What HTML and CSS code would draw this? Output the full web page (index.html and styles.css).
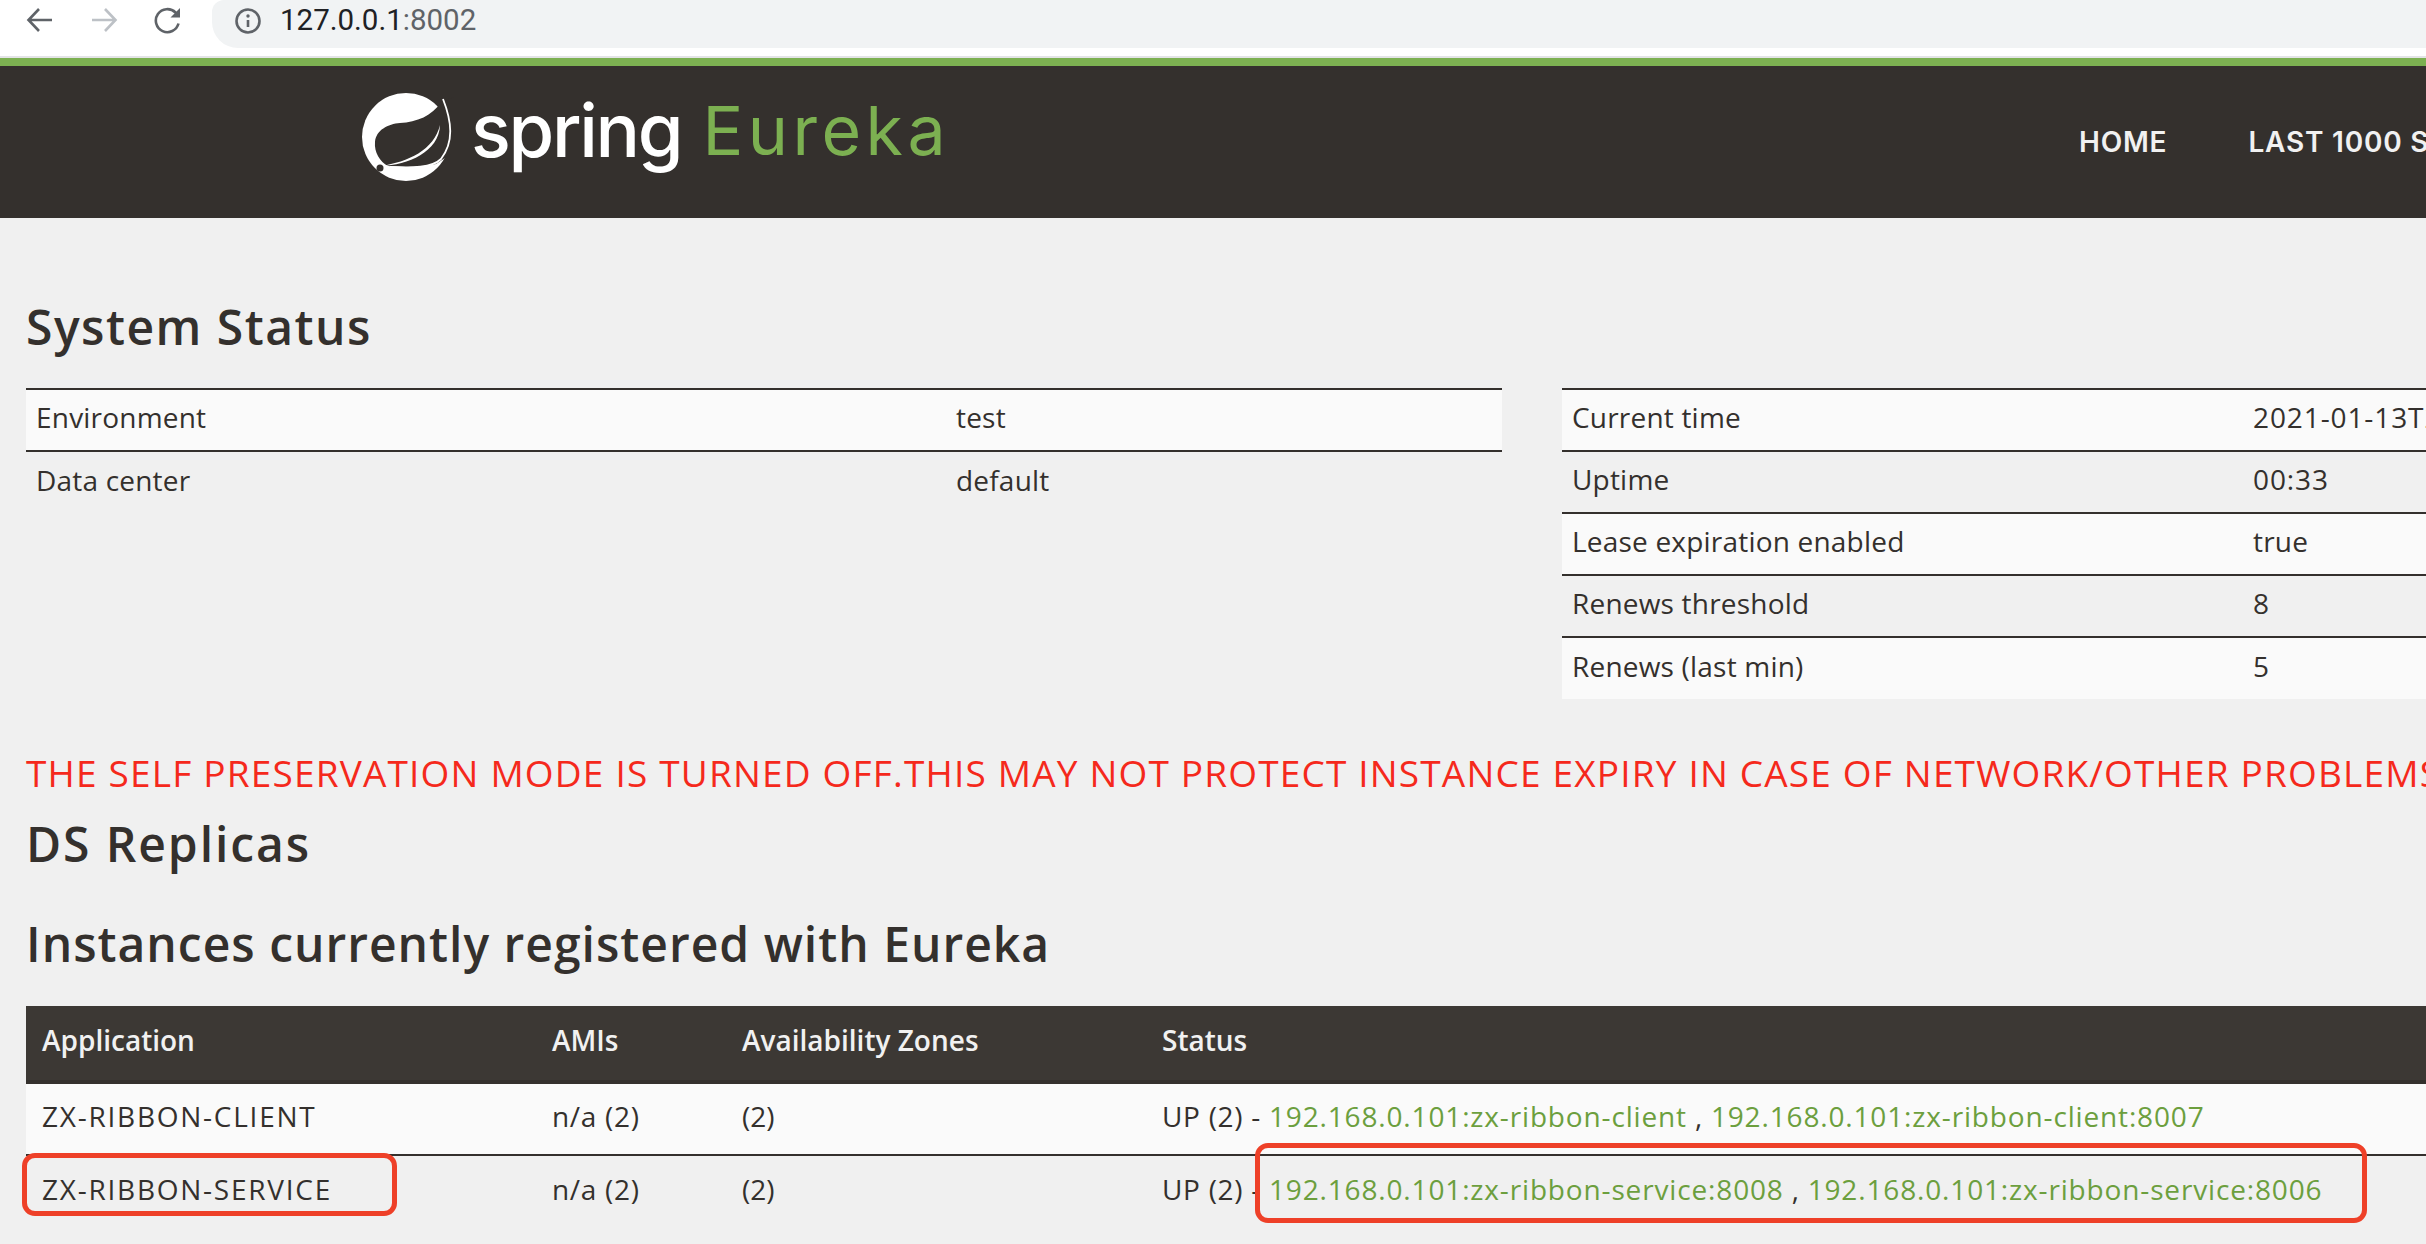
FILE: index.html
```html
<!DOCTYPE html>
<html lang="en">
<head>
<meta charset="utf-8">
<title>Eureka</title>
<link rel="stylesheet" href="styles.css">
</head>
<body>
<div class="chrome">
  <div class="chrome-buttons">
    <svg class="ico" viewBox="0 0 28 28"><path class="s-dark" d="M26 14H3M13 3 2.500 14 13 25"/></svg>
    <svg class="ico" viewBox="0 0 28 28"><path class="s-light" d="M2 14h23M15 3l10.500 11L15 25"/></svg>
    <svg class="ico" viewBox="0 0 28 28"><path class="s-dark" d="M24.500 17.500A11.500 11.500 0 1 1 21.500 6.500L25 10"/><path class="f-dark" d="M26 2V11.500H16.500z"/></svg>
  </div>
  <div class="omnibox">
    <svg class="info" viewBox="0 0 26 26"><circle class="s-dark" cx="13" cy="13" r="11.500"/><path class="s-dark" d="M13 12v7"/><circle class="f-dark" cx="13" cy="8" r="1.700"/></svg>
    <span class="url"><span class="host">127.0.0.1</span>:8002</span>
  </div>
</div>
<nav class="nav">
  <div class="brand">
    <svg class="leaf" viewBox="0 0 92 92">
      <circle class="leaf-w" cx="44" cy="45" r="44"/>
      <path class="leaf-d" d="M13 50C14 38 26 32 38 31 55 30 70 24 79 10L92 5V60L74 72C55 76 40 75 26 74 18 70 12 60 13 50Z"/>
      <path class="leaf-line" d="M81 7C90 30 92 50 79 67 70 76 50 76 28 75"/>
      <path class="leaf-w" d="M78 33C72 58 46 70 19 74 46 73 77 60 78 33Z"/>
      <circle class="leaf-d" cx="18" cy="76" r="3.500"/>
    </svg>
    <span class="spring">spring</span>
    <span class="eureka">Eureka</span>
  </div>
  <ul class="menu">
    <li>HOME</li>
    <li>LAST 1000 SINCE STARTUP</li>
  </ul>
</nav>
<main class="content">
  <h1 class="h-first">System Status</h1>
  <div class="status-tables">
    <table class="kv">
      <tr><td class="k-left">Environment</td><td>test</td></tr>
      <tr><td>Data center</td><td>default</td></tr>
    </table>
    <table class="kv">
      <tr><td class="k-right">Current time</td><td class="num">2021-01-13T21:35:36 +0800</td></tr>
      <tr><td>Uptime</td><td class="num">00:33</td></tr>
      <tr><td>Lease expiration enabled</td><td>true</td></tr>
      <tr><td>Renews threshold</td><td>8</td></tr>
      <tr><td>Renews (last min)</td><td>5</td></tr>
    </table>
  </div>
  <h4 class="warning">THE SELF PRESERVATION MODE IS TURNED OFF.THIS MAY NOT PROTECT INSTANCE EXPIRY IN CASE OF NETWORK/OTHER PROBLEMS.</h4>
  <h1 class="h-ds">DS Replicas</h1>
  <h1 class="h-inst">Instances currently registered with Eureka</h1>
  <table class="instances">
    <thead>
      <tr><th class="c-app">Application</th><th class="c-ami">AMIs</th><th class="c-zone">Availability Zones</th><th>Status</th></tr>
    </thead>
    <tbody>
      <tr>
        <td class="app">ZX-RIBBON-CLIENT</td><td class="count">n/a (2)</td><td>(2)</td>
        <td class="count">UP (2) - <a>192.168.0.101:zx-ribbon-client</a> , <a>192.168.0.101:zx-ribbon-client:8007</a></td>
      </tr>
      <tr>
        <td class="app"><span class="mark mark-a"></span>ZX-RIBBON-SERVICE</td><td class="count">n/a (2)</td><td>(2)</td>
        <td class="count">UP (2) - <span class="mark mark-b"></span><a>192.168.0.101:zx-ribbon-service:8008</a> , <a>192.168.0.101:zx-ribbon-service:8006</a></td>
      </tr>
    </tbody>
  </table>
</main>
</body>
</html>
```
FILE: styles.css
```css
html, body { margin: 0; padding: 0; height: 1244px; overflow: hidden; background: #f0f0f0; }
body { font-family: "Open Sans", "Noto Sans", sans-serif; color: #34302d; width: 2426px; }

.chrome { display: flex; height: 56px; background: #fff; border-bottom: 2px solid #e3e4e6; box-sizing: content-box; }
.chrome-buttons { display: flex; gap: 36px; padding: 6px 0 0 26px; width: 212px; box-sizing: border-box; }
.ico { width: 28px; height: 28px; }
.s-dark, .s-light { fill: none; stroke-width: 2.600; }
.s-dark { stroke: #5f6368; }
.s-light { stroke: #bdc1c6; }
.f-dark { fill: #5f6368; }
.omnibox { flex: 1; display: flex; align-items: center; gap: 19px; height: 48px; background: #f1f3f4; border-radius: 12px 0 0 26px; padding-left: 23px; box-sizing: border-box; }
.info { width: 26px; height: 26px; margin-top: -6px; }
.url { font-family: Roboto, sans-serif; font-size: 29.500px; color: #5f6368; line-height: 40px; margin-top: -8px; }
.host { color: #202124; }

.nav { display: flex; height: 152px; background: #34302d; border-top: 8px solid #7cb051; }
.brand { display: flex; align-items: center; padding: 0 0 0 362px; height: 152px; width: 2079px; box-sizing: border-box; flex: none; }
.leaf { width: 92px; height: 92px; flex: none; margin-top: -9px; }
.leaf-w { fill: #fff; }
.leaf-d { fill: #34302d; }
.leaf-line { fill: none; stroke: #fff; stroke-width: 1.800; }
.spring { font-family: Inter, sans-serif; font-size: 74px; font-weight: 500; color: #fff; margin-left: 17px; letter-spacing: -2.300px; margin-top: -24px; line-height: 80px; }
.eureka { font-family: Inter, sans-serif; font-size: 68px; font-weight: 400; color: #7cb051; margin-left: 21px; letter-spacing: 4.500px; margin-top: -24px; line-height: 80px; }
.menu { display: flex; gap: 81px; list-style: none; margin: 0; padding: 58px 0 0; font-family: Inter, sans-serif; font-weight: 600; font-size: 28px; letter-spacing: 0.800px; line-height: 36px; color: #f1f1f1; white-space: nowrap; flex: none; }

.content { width: 3038px; padding: 0 0 0 26px; box-sizing: content-box; }
h1 { margin: 0; font-size: 48px; font-weight: 600; letter-spacing: 1.100px; line-height: 60px; color: #34302d; white-space: nowrap; }
.h-first { padding-top: 79px; letter-spacing: 1.500px; }
.status-tables { display: flex; gap: 60px; margin-top: 31px; align-items: flex-start; }
table { border-collapse: collapse; table-layout: fixed; }
.kv { width: 1476px; font-size: 28px; letter-spacing: 0.200px; }
.kv td { height: 62px; padding: 0 10px 6px; box-sizing: border-box; border-top: 2px solid #34302d; line-height: 36px; white-space: nowrap; }
.kv tr:nth-child(odd) td { background: #fafafa; }
.kv td.num { letter-spacing: 0.900px; }
.k-left { width: 920px; }
.k-right { width: 681px; }
.warning { margin: 50px 0 0; font-size: 37px; font-weight: 500; letter-spacing: 1.180px; line-height: 48px; color: #f5291c; white-space: nowrap; }
.h-ds { margin-top: 17px; letter-spacing: 1.900px; }
.h-inst { margin-top: 40px; letter-spacing: 1px; }
.instances { margin-top: 32px; width: 2400px; font-size: 28px; }
.instances th { height: 76px; padding: 0 16px 7px; box-sizing: border-box; text-align: left; font-weight: 600; background: #3c3834; border-bottom: 4px solid #34302d; color: #f1f1f1; white-space: nowrap; }
.instances td { height: 73px; padding: 0 16px 7px; box-sizing: border-box; line-height: 36px; white-space: nowrap; }
.instances tbody tr:first-child td { background: #fafafa; border-bottom: 2px solid #34302d; }
.instances td.app { letter-spacing: 1.750px; }
.instances td.count { letter-spacing: 0.700px; }
.c-app { width: 510px; }
.c-ami { width: 190px; }
.c-zone { width: 420px; }
a { color: #6c9f3e; letter-spacing: 0.850px; }
.mark { position: absolute; box-sizing: border-box; border: 5px solid #ee4028; }
.mark-a { left: 22px; top: 1153px; width: 375px; height: 63px; border-radius: 13px; }
.mark-b { left: 1255px; top: 1143px; width: 1112px; height: 80px; border-radius: 13px; }
```
